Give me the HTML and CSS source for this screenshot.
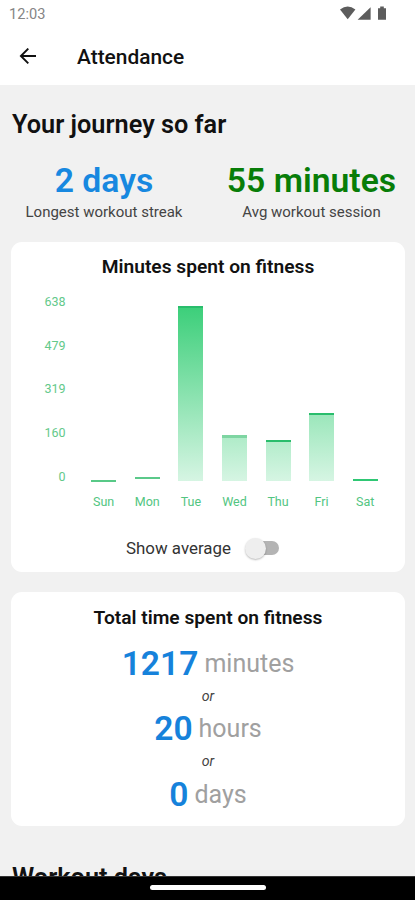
FILE: index.html
```html
<!DOCTYPE html>
<html lang="en">
<head>
<meta charset="utf-8">
<title>Attendance</title>
<link rel="stylesheet" href="styles.css">
</head>
<body>
<div class="screen">
  <div class="status">
    <span class="clock">12:03</span>
    <svg class="status-icons" width="48" height="15" viewBox="0 0 48 15" fill="#5c5c5c">
      <path d="M0 3.6Q7.7-2.6 15.4 3.6L7.7 13.2Z"/>
      <path d="M30.6 1.2V13.8H17.6Z"/>
      <path d="M38 2.2h2.2V.4h3.6v1.8H46v11.6h-8Z"/>
    </svg>
  </div>
  <header class="appbar">
    <svg class="back" width="18" height="18" viewBox="0 0 18 18" fill="none" stroke="#111" stroke-width="1.9"><path d="M17 8H2M9.3 .6L1.9 8l7.4 7.4"/></svg>
    <h1><span>Attendance</span></h1>
  </header>
  <main>
    <h2><span>Your journey so far</span></h2>
    <section class="stats">
      <div class="stat"><strong class="blue">2 days</strong><span class="caption">Longest workout streak</span></div>
      <div class="stat"><strong class="green">55 minutes</strong><span class="caption">Avg workout session</span></div>
    </section>
    <section class="card chart-card">
      <h3>Minutes spent on fitness</h3>
      <div class="chart">
        <div class="axis"><span>638</span><span>479</span><span>319</span><span>160</span><span>0</span></div>
        <div class="columns">
          <div class="col"><i class="bar flat zero"></i><b>Sun</b></div>
          <div class="col"><i class="bar low" style="height:4px"></i><b>Mon</b></div>
          <div class="col"><i class="bar" style="height:175px"></i><b>Tue</b></div>
          <div class="col"><i class="bar soft" style="height:46px"></i><b>Wed</b></div>
          <div class="col"><i class="bar" style="height:41px"></i><b>Thu</b></div>
          <div class="col"><i class="bar" style="height:68px"></i><b>Fri</b></div>
          <div class="col"><i class="bar flat bright"></i><b>Sat</b></div>
        </div>
      </div>
      <div class="toggle-row"><span>Show average</span><div class="switch"><div class="thumb"></div></div></div>
    </section>
    <section class="card total-card">
      <h3>Total time spent on fitness</h3>
      <p class="total"><strong>1217</strong><span>minutes</span></p>
      <p class="or">or</p>
      <p class="total"><strong>20</strong><span>hours</span></p>
      <p class="or">or</p>
      <p class="total"><strong>0</strong><span>days</span></p>
    </section>
    <h2 class="next"><span>Workout days</span></h2>
  </main>
  <footer class="nav"><div class="handle"></div></footer>
</div>
</body>
</html>
```

FILE: styles.css
```css
* { box-sizing: border-box; margin: 0; padding: 0; }
body { width: 415px; height: 900px; overflow: hidden; font-family: Roboto, sans-serif; color: #111; }
.screen { height: 900px; display: flex; flex-direction: column; background: #f1f1f1; }
.status { height: 28px; flex: none; background: #fff; display: flex; justify-content: space-between; padding: 6px 27px 0 9px; }
.clock { font-size: 14.6px; line-height: 17px; color: #858585; }
.appbar { height: 57px; flex: none; background: #fff; display: flex; align-items: center; padding-left: 19px; }
.back { margin-right: 40px; }
h1 { font-size: 20.9px; line-height: 24px; font-weight: 500; }
main { flex: 1; min-height: 0; overflow: hidden; padding: 25px 10px 0 11px; }
h2 { font-size: 25.3px; line-height: 30px; font-weight: 600; padding-left: 1px; white-space: nowrap; }
.stats { display: grid; grid-template-columns: 186px 1fr; column-gap: 17px; margin: 21px -4px 20px 0; }
.stat { display: flex; flex-direction: column; align-items: center; white-space: nowrap; }
.stat strong { font-size: 33.7px; line-height: 40px; font-weight: 600; }
.blue { color: #1788e0; }
.green { color: #087d08; }
.caption { font-size: 15px; line-height: 22px; color: #444; }
.card { background: #fff; border-radius: 11px; text-align: center; }
.stats + .card { margin-top: -1px; }
h3 { font-size: 19.2px; line-height: 24px; font-weight: 600; }
.chart-card { height: 330px; padding-top: 13px; }
.chart { display: flex; padding: 11px 18px 0 25px; }
.axis { width: 30px; display: flex; flex-direction: column; text-align: right; color: #63c98a; font-size: 12.5px; line-height: 15px; gap: 28.7px; padding-top: 4px; }
.columns { flex: 1; display: grid; grid-template-columns: repeat(7, 43.6px); padding-left: 16.3px; }
.col { height: 220px; display: flex; flex-direction: column; align-items: center; justify-content: flex-end; }
.col b { font-size: 12.5px; line-height: 16px; font-weight: 400; color: #52c581; margin-top: 13px; }
.bar { width: 25px; border-top: 2px solid #29bd6c; background: linear-gradient(to top, #d6f5e3, #3ccf7a) bottom / 100% 174px no-repeat; }
.bar.low { border-color: #5bc98a; background: none; }
.bar.flat { height: 2px; background: none; border-color: #58c987; }
.bar.zero { margin-bottom: -1px; }
.bar.bright { border-color: #2fc774; }
.bar.soft { border-top-width: 3px; border-color: #7ed5a2; }
.toggle-row { display: flex; justify-content: center; align-items: center; margin-top: 25px; padding-right: 11px; height: 26px; font-size: 16.9px; color: #333; gap: 17px; }
.switch { width: 31px; height: 14px; border-radius: 7px; background: #b4b4b4; }
.thumb { width: 21px; height: 21px; margin: -3px 0 0 -3px; border-radius: 50%; background: #eee; box-shadow: 0 1px 2px #0004; }
.total-card { margin-top: 20px; height: 234px; padding-top: 14px; }
.total { display: flex; justify-content: center; align-items: center; gap: 6px; height: 40px; line-height: 40px; }
.total strong { font-size: 33.6px; font-weight: 600; color: #1682db; }
.total span { font-size: 25px; color: #a0a0a0; }
h3 + .total { margin-top: 13.5px; }
.or { font-size: 14.2px; line-height: 25.5px; font-style: italic; color: #444; }
.next { margin-top: 37px; }
.nav { height: 24px; flex: none; background: #000; border-top: 1px solid #333; padding-top: 8px; }
.handle { width: 116px; height: 5px; border-radius: 3px; background: #fff; margin: 0 auto; }
```
